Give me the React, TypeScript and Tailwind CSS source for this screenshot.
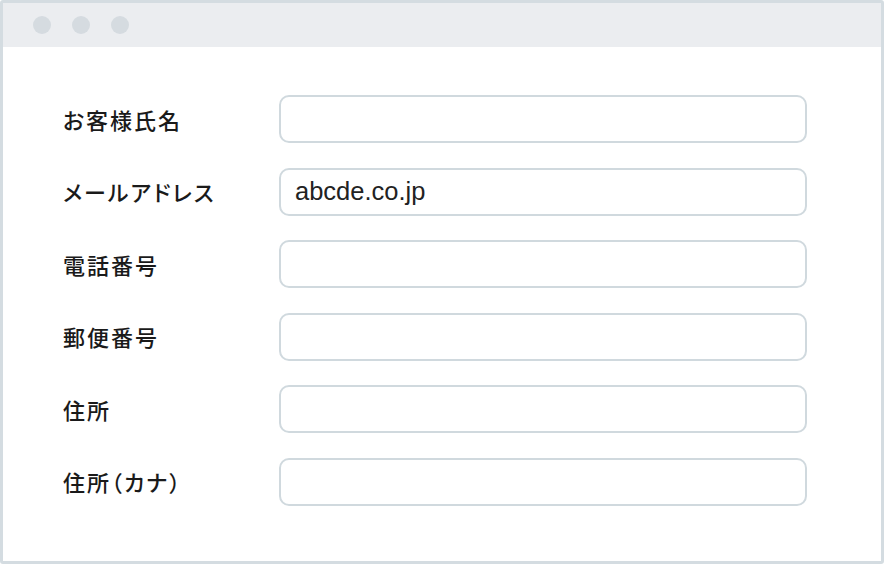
const fields: { label: string; value?: string }[] = [
  { label: "お客様氏名" },
  { label: "メールアドレス", value: "abcde.co.jp" },
  { label: "電話番号" },
  { label: "郵便番号" },
  { label: "住所" },
  { label: "住所（カナ）" },
];

export default function App() {
  return (
    <div className="w-[884px] h-[564px] bg-white">
      <div className="flex h-full flex-col border-[3px] border-[#d4dce1] rounded-[3px] overflow-hidden">
        {/* Window chrome */}
        <div className="flex h-[44px] shrink-0 items-center gap-[21px] bg-[#ebedf0] pl-[30px]">
          <span className="size-[18px] rounded-full bg-[#d5dbe0]" />
          <span className="size-[18px] rounded-full bg-[#d5dbe0]" />
          <span className="size-[18px] rounded-full bg-[#d5dbe0]" />
        </div>

        {/* Form */}
        <div className="flex flex-1 flex-col gap-[24.6px] pl-[60px] pt-[48px]">
          {fields.map((f) => (
            <div key={f.label} className="flex h-[48px] items-center">
              <div
                className="w-[216px] shrink-0 text-[22px] font-medium tracking-[2px] text-[#1a1a1a]"
                style={{ fontFamily: '"Noto Sans CJK JP", sans-serif', fontFeatureSettings: '"palt"' }}
              >
                {f.label}
              </div>
              <div className="flex h-full w-[528px] items-center rounded-[10px] border-[2.5px] border-[#d0d9de] px-[14px]">
                {f.value && (
                  <span
                    className="text-[25.5px] text-[#222] leading-none"
                    style={{ fontFamily: '"Liberation Sans", Arial, sans-serif' }}
                  >
                    {f.value}
                  </span>
                )}
              </div>
            </div>
          ))}
        </div>
      </div>
    </div>
  );
}
